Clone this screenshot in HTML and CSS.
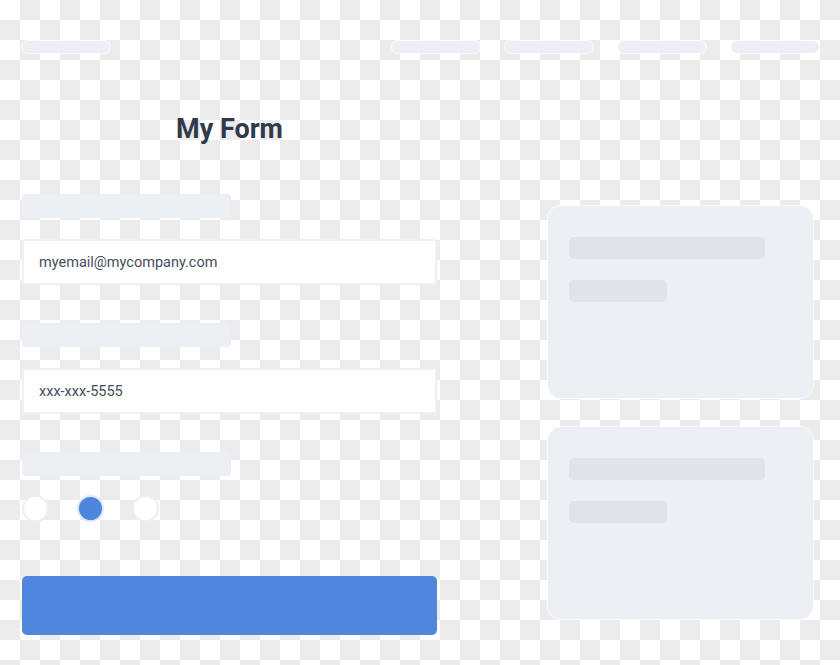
FILE: index.html
```html
<!DOCTYPE html>
<html>
	<head>
		<meta charset="UTF-8">
		<title>My Form</title>
		<link rel="stylesheet" href="styles.css">
	</head>
	<body>
		<div class="page">
			<div class="top_bar">
				<span class="logo"></span>
				<ul class="nav">
					<li></li>
					<li></li>
					<li></li>
					<li></li>
				</ul>
			</div>

			<div class="main">
				<form class="form_wrap">
					<h1>My Form</h1>

					<div class="label"></div>
					<div class="input">myemail@mycompany.com</div>

					<div class="label"></div>
					<div class="input">xxx-xxx-5555</div>

					<div class="label"></div>
					<div class="radios">
						<span class="radio"></span>
						<span class="radio on"></span>
						<span class="radio"></span>
					</div>

					<div class="btn"></div>
				</form>

				<div class="side">
					<div class="card">
						<p class="line long"></p>
						<p class="line short"></p>
					</div>
					<div class="card">
						<p class="line long"></p>
						<p class="line short"></p>
					</div>
				</div>
			</div>
		</div>
	</body>
</html>
```

FILE: styles.css
```css
* { margin: 0; padding: 0; box-sizing: border-box; }
li { list-style: none; }
html, body { height: 100%; }
body {
	font-family: Roboto, "Liberation Sans", sans-serif;
	background: repeating-conic-gradient(#ececec 0 25%, #fff 0 50%) 0 0 / 40px 40px;
}
.page { width: 840px; height: 665px; padding: 41px 21px 0 22px; }

/* header skeleton */
.top_bar { display: flex; justify-content: space-between; align-items: center; }
.logo, .nav li {
	display: block; width: 88px; height: 12px; border-radius: 6px;
	background: #eceff3; box-shadow: 0 0 0 1px rgba(255,255,255,.8);
}
.nav { display: flex; gap: 25px; }

/* two columns */
.main { display: grid; grid-template-columns: 415px 265px; column-gap: 111px; padding-top: 60px; }

.form_wrap { display: flex; flex-direction: column; align-items: flex-start; }
.form_wrap h1 {
	align-self: stretch; text-align: center;
	font-size: 27px; line-height: 32px; font-weight: 700; color: #2f3a4b;
}
.label { width: 209px; height: 24px; border-radius: 4px; background: #eceff3; margin-top: 38px; }
.form_wrap h1 + .label { margin-top: 49px; }
.input {
	width: 415px; height: 46px; margin-top: 21px; padding-left: 15px;
	display: flex; align-items: center;
	background: #fff; border: 2px solid #eef0f4; border-radius: 3px;
	font-size: 14.5px; color: #464d5a;
}

.radios { display: flex; gap: 28px; margin-top: 19px; }
.radio { width: 27px; height: 27px; border-radius: 50%; background: #fff; border: 2px solid #eceef2; }
.radio.on { background: #4f86db; border-color: #dde7f8; }

.btn { width: 415px; height: 59px; margin-top: 54px; border-radius: 5px; background: #5087dc; }

/* right cards */
.side { display: flex; flex-direction: column; gap: 29px; padding-top: 93px; }
.card {
	height: 192px; padding: 31px 21px; border-radius: 13px;
	background: #eceff3; box-shadow: 0 0 0 1px rgba(255,255,255,.7);
}
.line { height: 22px; border-radius: 5px; background: #e1e3e7; }
.line.long { width: 196px; }
.line.short { width: 98px; margin-top: 21px; }
```
